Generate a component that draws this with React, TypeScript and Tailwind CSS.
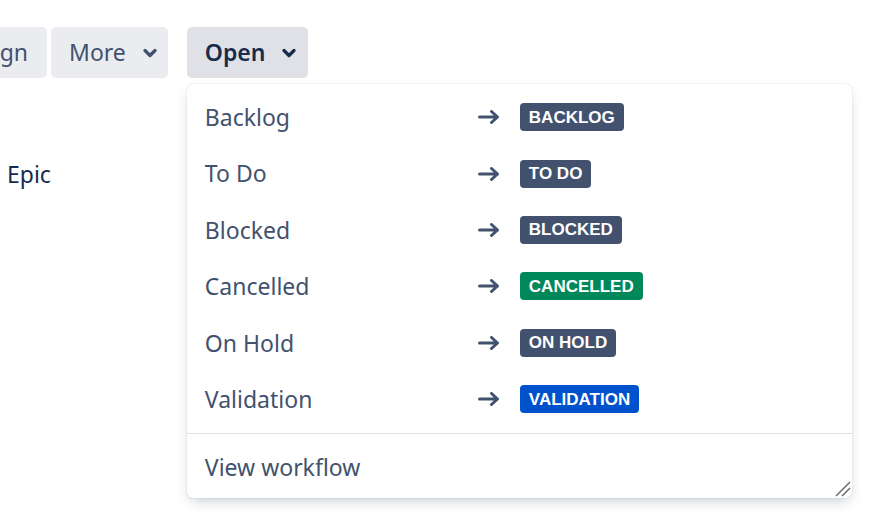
import { ChevronDown } from 'lucide-react'

const TRANSITIONS = [
  { label: 'Backlog', status: 'BACKLOG', tone: 'bg-[#42526e]' },
  { label: 'To Do', status: 'TO DO', tone: 'bg-[#42526e]' },
  { label: 'Blocked', status: 'BLOCKED', tone: 'bg-[#42526e]' },
  { label: 'Cancelled', status: 'CANCELLED', tone: 'bg-[#00875a]' },
  { label: 'On Hold', status: 'ON HOLD', tone: 'bg-[#42526e]' },
  { label: 'Validation', status: 'VALIDATION', tone: 'bg-[#0052cc]' },
]

function Arrow() {
  return (
    <svg width="23" height="14" viewBox="0 0 23 14" className="text-[#42526e]">
      <path d="M1.5 7h18M13.5 1.5 19.5 7l-6 5.5" fill="none" stroke="currentColor" strokeWidth="3" strokeLinecap="round" strokeLinejoin="round" />
    </svg>
  )
}

function Chevron() {
  return <ChevronDown className="w-[20px] h-[20px] ml-[14px]" strokeWidth={4} />
}

export default function App() {
  return (
    <div className="w-[880px] h-[522px] bg-white overflow-hidden font-['Noto_Sans',sans-serif] text-[#172b4d]">
      <div className="flex items-center pt-[27px] -ml-[61px]">
        <button className="h-[51px] pl-[18px] pr-[19px] rounded-[5px] bg-[#ebecf0] text-[#42526e] text-[23px]">
          Assign
        </button>
        <button className="ml-[4px] h-[51px] pl-[18px] pr-[8px] rounded-[5px] bg-[#ebecf0] text-[#42526e] text-[23px] flex items-center">
          More
          <Chevron />
        </button>
        <div className="relative ml-[19px]">
          <button className="h-[51px] pl-[18px] pr-[9px] rounded-[5px] bg-[#dfe1e6] text-[#172b4d] text-[23px] font-semibold flex items-center">
            Open
            <Chevron />
          </button>
          <div className="absolute left-0 top-[57px] w-[665px] h-[414px] bg-white rounded-[6px] shadow-[0_6px_14px_-4px_rgba(9,30,66,0.25),0_0_1px_rgba(9,30,66,0.31)] flex flex-col">
            <div className="pt-[5px] pb-[6px]">
              {TRANSITIONS.map((t) => (
                <div key={t.label} className="h-[56.4px] pl-[18px] flex items-center">
                  <span className="w-[273px] text-[23px] text-[#42526e]">{t.label}</span>
                  <Arrow />
                  <span
                    className={`ml-[19px] h-[28px] px-[9px] rounded-[4px] ${t.tone} text-white text-[17px] font-bold leading-none flex items-center font-['Liberation_Sans',sans-serif]`}
                  >
                    {t.status}
                  </span>
                </div>
              ))}
            </div>
            <div className="border-t border-[#dfe1e6] flex-1 relative flex items-center pl-[18px] pt-[3px]">
              <span className="text-[23px] text-[#42526e]">View workflow</span>
              <svg width="16" height="16" viewBox="0 0 16 16" className="absolute right-[1px] bottom-[1px] text-[#6b6b6b]">
                <path d="M1 15 15 1M7 15l8-8" stroke="currentColor" strokeWidth="1.5" fill="none" />
              </svg>
            </div>
          </div>
        </div>
      </div>
      <div className="mt-[80px] pl-[7px] text-[23px] text-[#172b4d] leading-[32px]">Epic</div>
    </div>
  )
}
